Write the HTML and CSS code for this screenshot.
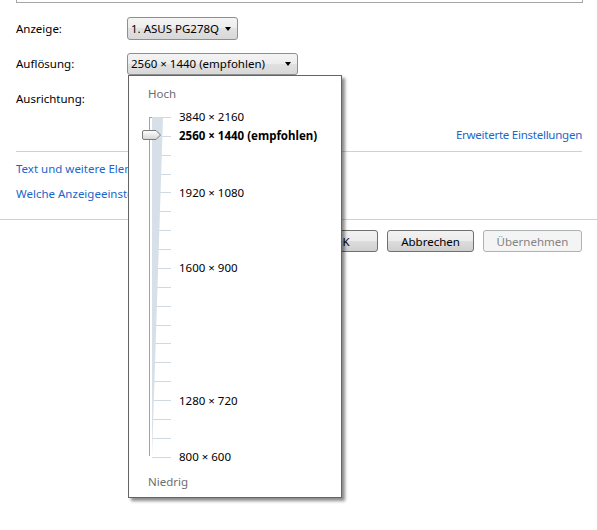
FILE: index.html
```html
<!DOCTYPE html>
<html lang="de">
<head>
<meta charset="utf-8">
<title>Bildschirmauflösung</title>
<link rel="stylesheet" href="styles.css">
</head>
<body>
<div class="page">
  <div class="topbox"></div>
  <div class="form">
    <div class="row">
      <span class="label">Anzeige:</span>
      <div class="combo c1"><span class="value">1. ASUS PG278Q</span><i class="arrow"></i></div>
    </div>
    <div class="row">
      <span class="label">Auflösung:</span>
      <div class="combo c2"><span class="value">2560 × 1440 (empfohlen)</span><i class="arrow"></i></div>
    </div>
    <div class="row">
      <span class="label">Ausrichtung:</span>
    </div>
  </div>
  <div class="advanced"><a class="link">Erweiterte Einstellungen</a></div>
  <div class="sep inner"></div>
  <div class="links">
    <a class="link">Text und weitere Elemente vergrößern oder verkleinern</a>
    <a class="link">Welche Anzeigeeinstellungen sollen ausgewählt werden?</a>
  </div>
  <div class="sep full"></div>
  <div class="buttons">
    <button class="btn ok">OK</button>
    <button class="btn cancel">Abbrechen</button>
    <button class="btn apply" disabled>Übernehmen</button>
  </div>
</div>

<div class="dropdown">
  <div class="end">Hoch</div>
  <div class="slider">
    <svg class="track" width="20" height="360" viewBox="0 0 20 360">
      <polygon points="4,9.5 15,9.5 4,349" fill="#d7e0e8"/>
      <line x1="1.5" y1="9" x2="1.5" y2="348" stroke="#a2a2a2" stroke-width="1"/>
      <line x1="1" y1="9.5" x2="4" y2="9.5" stroke="#a2a2a2" stroke-width="1"/>
    </svg>
    <svg class="thumb" width="20" height="10" viewBox="0 0 20 10">
      <defs>
        <linearGradient id="tg" x1="0" y1="0" x2="0" y2="1">
          <stop offset="0" stop-color="#ffffff"/>
          <stop offset="1" stop-color="#d4d4d4"/>
        </linearGradient>
      </defs>
      <path d="M2,0.5 H14 L18.5,5 L14,9.5 H2 Q0.5,9.5 0.5,8 V2 Q0.5,0.5 2,0.5 Z" fill="url(#tg)" stroke="#7a7a7a" stroke-width="1"/>
    </svg>
    <div class="step"><i class="tick"></i><span class="res">3840 × 2160</span></div>
    <div class="step"><i class="tick"></i><span class="res current">2560 × 1440 (empfohlen)</span></div>
    <div class="step"><i class="tick"></i></div>
    <div class="step"><i class="tick"></i></div>
    <div class="step"><i class="tick"></i><span class="res">1920 × 1080</span></div>
    <div class="step"><i class="tick"></i></div>
    <div class="step"><i class="tick"></i></div>
    <div class="step"><i class="tick"></i></div>
    <div class="step"><i class="tick"></i><span class="res">1600 × 900</span></div>
    <div class="step"><i class="tick"></i></div>
    <div class="step"><i class="tick"></i></div>
    <div class="step"><i class="tick"></i></div>
    <div class="step"><i class="tick"></i></div>
    <div class="step"><i class="tick"></i></div>
    <div class="step"><i class="tick"></i></div>
    <div class="step"><i class="tick"></i><span class="res">1280 × 720</span></div>
    <div class="step"><i class="tick"></i></div>
    <div class="step"><i class="tick"></i></div>
    <div class="step"><i class="tick"></i><span class="res">800 × 600</span></div>
  </div>
  <div class="end low">Niedrig</div>
</div>
</body>
</html>
```

FILE: styles.css
```css
html, body {
  margin: 0;
  padding: 0;
  background: #ffffff;
}

body {
  width: 597px;
  height: 530px;
  overflow: hidden;
  position: relative;
  font-family: "Noto Sans", "Open Sans", sans-serif;
  font-size: 11.5px;
  color: #000000;
}

.page {
  display: flex;
  flex-direction: column;
}

.topbox {
  height: 2px;
  margin: 0 14px 0 16px;
  border: 1px solid #a5a5a5;
  border-top: none;
}

.form {
  display: flex;
  flex-direction: column;
  gap: 12px;
  padding: 14px 0 0 16px;
}

.row {
  display: flex;
  align-items: center;
  height: 23px;
}

.label {
  width: 111px;
  line-height: 16px;
}

.combo {
  box-sizing: border-box;
  height: 23px;
  display: flex;
  align-items: center;
  justify-content: space-between;
  padding: 0 6px 0 3px;
  border: 1px solid #8e8f8f;
  border-radius: 3px;
  background: linear-gradient(#f4f4f4 0%, #ececec 50%, #e1e1e1 50%, #d8d8d8 100%);
}

.c1 { width: 111px; }
.c2 { width: 171px; height: 22px; }

.arrow {
  width: 0;
  height: 0;
  border-left: 3.5px solid transparent;
  border-right: 3.5px solid transparent;
  border-top: 4px solid #000000;
}

.advanced {
  display: flex;
  justify-content: flex-end;
  padding-right: 15px;
  margin-top: 17px;
  line-height: 16px;
}

.advanced .link {
  letter-spacing: -0.25px;
}

.link {
  color: #1a66cc;
  line-height: 16px;
  white-space: nowrap;
}

.sep {
  height: 1px;
  background: #d0d0d0;
}

.sep.inner {
  margin: 8px 15px 0 16px;
}

.sep.full {
  margin-top: 17px;
}

.links {
  display: flex;
  flex-direction: column;
  gap: 9px;
  padding: 9px 0 0 16px;
}

.buttons {
  display: flex;
  justify-content: flex-end;
  gap: 9px;
  padding: 10px 15px 0 0;
}

.btn {
  box-sizing: border-box;
  height: 22px;
  width: 87px;
  font: inherit;
  color: #000000;
  border: 1px solid #707070;
  border-radius: 3px;
  background: linear-gradient(#f2f2f2 0%, #ebebeb 50%, #dddddd 50%, #cfcfcf 100%);
  padding: 0;
}

.btn.ok {
  width: 73px;
}

.btn.apply {
  width: 99px;
  color: #838383;
  border-color: #adb2b5;
  background: #f4f4f4;
}

/* dropdown overlay */
.dropdown {
  position: absolute;
  left: 128px;
  top: 75px;
  width: 214px;
  height: 423px;
  box-sizing: border-box;
  background: #ffffff;
  border: 1px solid #646464;
  box-shadow: 3px 3px 3px rgba(0, 0, 0, 0.45);
  padding: 10px 0 0 19px;
  display: flex;
  flex-direction: column;
}

.end {
  color: #6d6d6d;
  line-height: 16px;
}

.end.low {
  margin-top: 7px;
}

.slider {
  position: relative;
  margin-top: 6px;
  display: flex;
  flex-direction: column;
}

.track {
  position: absolute;
  left: 0;
  top: 0;
}

.thumb {
  position: absolute;
  left: -6px;
  top: 22px;
}

.step {
  height: 18.89px;
  display: flex;
  align-items: center;
  padding-left: 4px;
}

.tick {
  width: 19px;
  height: 1px;
  background: #cfd9e2;
}

.res {
  margin-left: 8px;
  line-height: 16px;
  white-space: nowrap;
}

.res.current {
  font-weight: bold;
}
```
